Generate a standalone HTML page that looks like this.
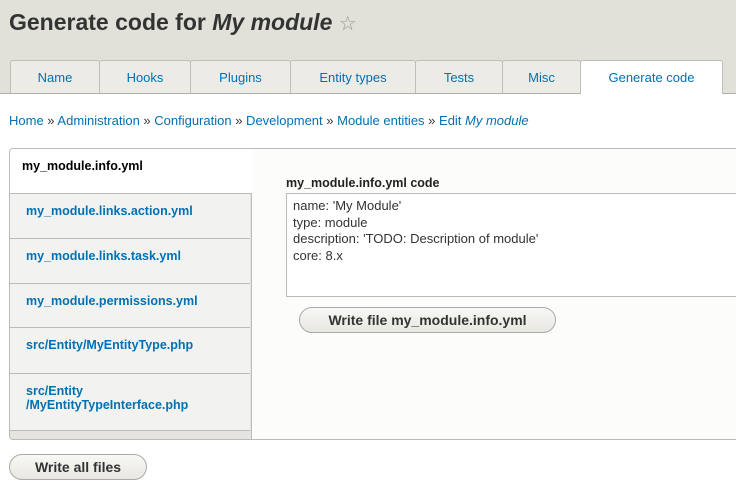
<!DOCTYPE html>
<html><head><style>
body{margin:0;width:736px;height:503px;background:#fff;font-family:"Liberation Sans",sans-serif;position:relative;overflow:hidden}
.hdr{position:absolute;left:0;top:0;width:736px;height:93px;background:#e1e0d9;border-bottom:1px solid #b0aea6}
h1{position:absolute;left:9px;top:9px;margin:0;font-size:23px;font-weight:bold;color:#333}
.tab{position:absolute;top:60px;height:33px;background:#ecebe6;border:1px solid #bfbfba;border-bottom:none;box-sizing:border-box;color:#0071b3;font-size:13px;text-align:center;line-height:33px;border-radius:3px 3px 0 0}
.bc{position:absolute;left:9px;top:113px;font-size:13px;color:#0071b3}
.bc span{color:#333}
.vt{position:absolute;left:9px;top:148px;width:740px;height:292px;border:1px solid #bbb;border-radius:4px;box-sizing:border-box;background:#fcfcfa;overflow:hidden}
.side{position:absolute;left:0;top:0;width:241px;height:292px;background:#e5e4df;border-right:1px solid #bbb}
.it{position:absolute;left:0;width:240px;background:#f2f2f0;border-bottom:1px solid #bbb;box-sizing:border-box;color:#0071b3;font-weight:bold;font-size:12.5px;padding:10px 0 0 16px;line-height:14px}
.it.a{background:#fff;color:#000;padding-left:12px;width:242px;z-index:2}
.lbl{position:absolute;left:286px;top:176px;font-size:12.5px;font-weight:bold;color:#222}
.ta{position:absolute;left:286px;top:193px;width:460px;height:104px;border:1px solid #bbb;box-sizing:border-box;background:#fff;font-size:13px;color:#333;padding:4px 6px;line-height:16.5px}
.btn{position:absolute;height:26px;border:1px solid #aaa;border-radius:13px;background:linear-gradient(#f8f8f4,#e8e7e1);box-sizing:border-box;font-weight:bold;font-size:14px;color:#333;text-align:center;line-height:24px}
</style></head><body>
<div class="hdr"></div>
<h1>Generate code for <i>My module</i> <span style="font-weight:normal;color:#999;font-size:20px">☆</span></h1>
<div class="tab" style="left:10px;width:90px">Name</div>
<div class="tab" style="left:99px;width:92px">Hooks</div>
<div class="tab" style="left:190px;width:101px">Plugins</div>
<div class="tab" style="left:290px;width:126px">Entity types</div>
<div class="tab" style="left:415px;width:88px">Tests</div>
<div class="tab" style="left:502px;width:79px">Misc</div>
<div class="tab" style="left:580px;width:143px;background:#fff;height:34px">Generate code</div>
<div class="bc">Home <span>»</span> Administration <span>»</span> Configuration <span>»</span> Development <span>»</span> Module entities <span>»</span> Edit <i>My module</i></div>
<div class="vt"><div class="side">
<div class="it a" style="top:0;height:45px">my_module.info.yml</div>
<div class="it" style="top:45px;height:45px">my_module.links.action.yml</div>
<div class="it" style="top:90px;height:45px">my_module.links.task.yml</div>
<div class="it" style="top:135px;height:44px">my_module.permissions.yml</div>
<div class="it" style="top:179px;height:46px">src/Entity/MyEntityType.php</div>
<div class="it" style="top:225px;height:57px">src/Entity<br>/MyEntityTypeInterface.php</div>
</div></div>
<div class="lbl">my_module.info.yml code</div>
<div class="ta">name: 'My Module'<br>type: module<br>description: 'TODO: Description of module'<br>core: 8.x</div>
<div class="btn" style="left:299px;top:307px;width:257px">Write file my_module.info.yml</div>
<div class="btn" style="left:9px;top:454px;width:138px">Write all files</div>
</body></html>
